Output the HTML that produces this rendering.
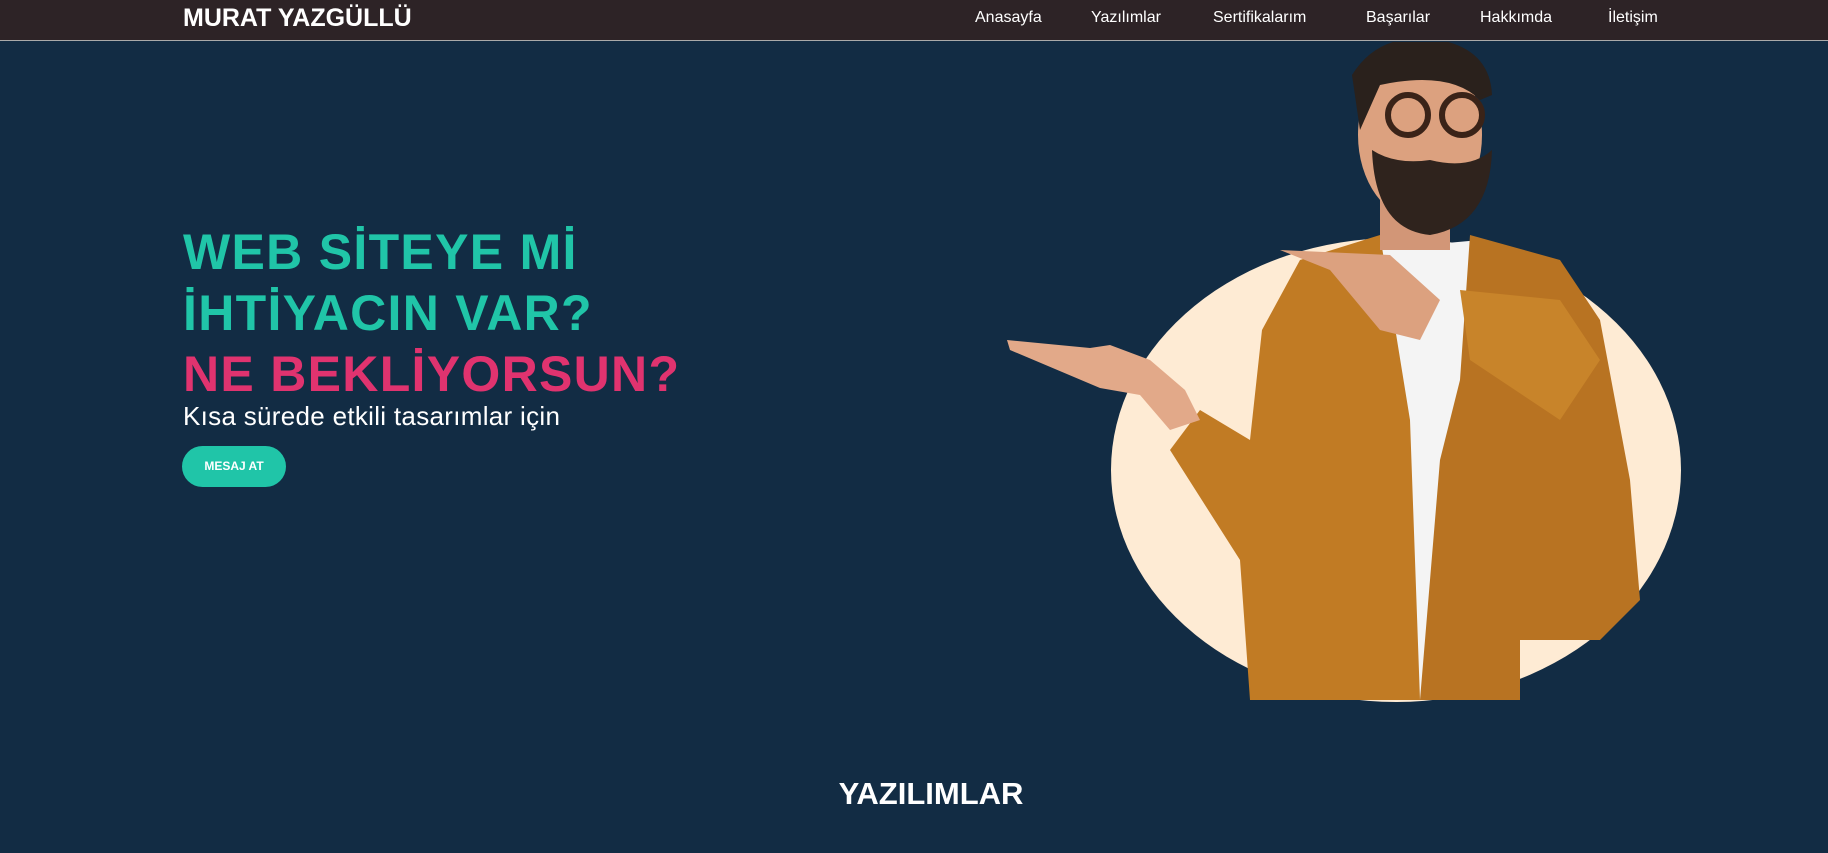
<!DOCTYPE html>
<html><head><meta charset="utf-8"><style>
*{margin:0;padding:0;box-sizing:border-box}
body{width:1828px;height:853px;overflow:hidden;background:#122c44;font-family:"Liberation Sans",sans-serif;position:relative}
.nav{position:absolute;left:0;top:0;width:1828px;height:41px;background:#2d2326;border-bottom:1px solid #aaa}
.logo{position:absolute;left:183px;top:4px;color:#fff;font-weight:bold;font-size:25px}
.nav a{position:absolute;top:9px;color:#fff;font-size:16px;text-decoration:none}
h1{position:absolute;left:183px;top:222px;font-size:50px;line-height:61px;font-weight:bold;color:#20c5a8;letter-spacing:1.3px}
h1 span{color:#e0336f}
.sub{position:absolute;left:183px;top:401px;color:#fff;font-size:26px;letter-spacing:0.3px}
.btn{position:absolute;left:182px;top:446px;width:104px;height:41px;border-radius:21px;background:#20c5a8;color:#fff;font-weight:bold;font-size:12px;text-align:center;line-height:41px}
.h2{position:absolute;left:0;width:1862px;text-align:center;top:776px;color:#fff;font-weight:bold;font-size:31px}
svg{position:absolute;left:0;top:0}
</style></head><body>
<svg width="1828" height="853">
<defs><clipPath id="c"><rect x="1000" y="42" width="700" height="660"/></clipPath></defs>
<g clip-path="url(#c)">
<ellipse cx="1396" cy="470" rx="285" ry="232" fill="#feebd4"/>
<path d="M1370 250 L1480 240 L1460 700 L1350 700 Z" fill="#f4f4f4"/>
<path d="M1300 260 L1380 235 L1410 420 L1420 700 L1250 700 L1240 560 L1170 450 L1200 410 L1250 440 L1262 330 Z" fill="#c17b24"/>
<path d="M1470 235 L1560 260 L1600 320 L1630 480 L1640 600 L1600 640 L1520 640 L1520 700 L1420 700 L1440 460 L1460 380 Z" fill="#b87322"/>
<path d="M1460 290 L1560 300 L1600 360 L1560 420 L1470 360 Z" fill="#c8842a"/>
<path d="M1280 250 L1390 255 L1440 300 L1420 340 L1380 330 L1330 270 Z" fill="#dca17f"/>
<path d="M1007 340 L1090 348 L1110 345 L1150 360 L1185 390 L1200 420 L1170 430 L1140 395 L1100 388 L1010 350 Z" fill="#e2a989"/>
<rect x="1380" y="180" width="70" height="70" fill="#d29677"/>
<ellipse cx="1420" cy="135" rx="62" ry="85" fill="#dca17f"/>
<path d="M1352 75 Q1380 30 1440 40 Q1490 50 1492 95 L1480 100 Q1450 70 1380 85 L1360 130 Z" fill="#2a211c"/>
<path d="M1372 150 Q1375 230 1430 235 Q1490 225 1492 150 Q1470 170 1430 160 Q1395 165 1372 150 Z" fill="#2f231d"/>
<circle cx="1408" cy="115" r="20" fill="none" stroke="#3a2318" stroke-width="6"/>
<circle cx="1462" cy="115" r="20" fill="none" stroke="#3a2318" stroke-width="6"/>
</g>
</svg>
<div class="nav">
<div class="logo">MURAT YAZGÜLLÜ</div>
<a style="left:975px">Anasayfa</a>
<a style="left:1091px">Yazılımlar</a>
<a style="left:1213px">Sertifikalarım</a>
<a style="left:1366px">Başarılar</a>
<a style="left:1480px">Hakkımda</a>
<a style="left:1608px">İletişim</a>
</div>
<h1>WEB SİTEYE Mİ<br>İHTİYACIN VAR?<br><span>NE BEKLİYORSUN?</span></h1>
<div class="sub">Kısa sürede etkili tasarımlar için</div>
<div class="btn">MESAJ AT</div>
<div class="h2">YAZILIMLAR</div>
</body></html>
